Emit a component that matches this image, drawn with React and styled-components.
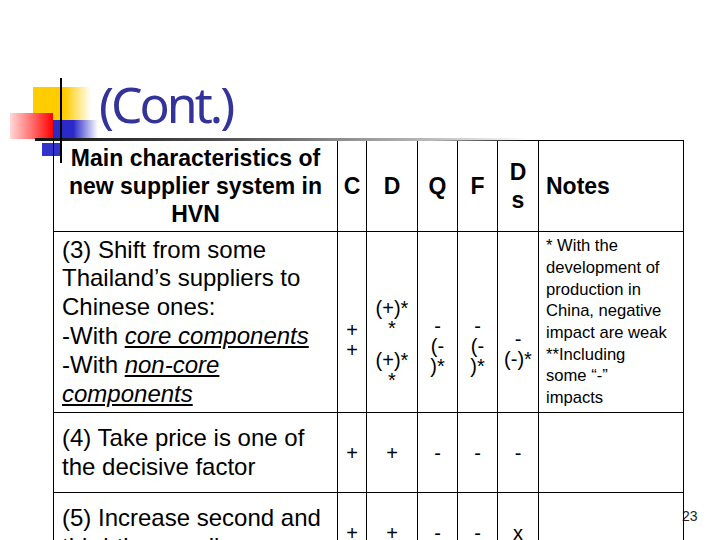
import React from 'react';
import styled, { createGlobalStyle } from 'styled-components';

const Global = createGlobalStyle`
  html, body { margin: 0; padding: 0; background: #fff; overflow: hidden; width: 720px; height: 540px; }
  #root { width: 720px; height: 540px; }
`;

const Slide = styled.div`
  position: relative;
  width: 720px;
  height: 540px;
  overflow: hidden;
  background: #fff;
  font-family: "Liberation Sans", Arial, sans-serif;
  color: #000;
`;

const Deco = styled.div`
  position: absolute;
  left: ${p => p.$x}px;
  top: ${p => p.$y}px;
  width: ${p => p.$w}px;
  height: ${p => p.$h}px;
  background: ${p => p.$bg};
  z-index: ${p => p.$z || 0};
`;

const TitleBar = styled.header`
  height: 140px;
  box-sizing: border-box;
  padding: 79px 0 0 99px;
  position: relative;
  z-index: 1;
`;

const Title = styled.h1`
  margin: 0;
  font-family: "Noto Sans", sans-serif;
  font-weight: 400;
  font-size: 50px;
  line-height: 50px;
  color: #333399;
  letter-spacing: -3px;
`;

const Table = styled.div`
  position: relative;
  z-index: 1;
  margin-left: 53px;
  width: 630px;
  display: grid;
  grid-template-columns: 284px 29px 51px 40px 40px 41px 145px;
  grid-template-rows: 91px 181px 80px 80px;
  border-top: 1px solid #000;
  border-left: 1px solid #000;
`;

const Cell = styled.div`
  box-sizing: border-box;
  border-right: 1px solid #000;
  border-bottom: 1px solid #000;
  display: flex;
  flex-direction: column;
  justify-content: center;
  align-items: ${p => (p.$left ? 'flex-start' : 'center')};
  text-align: ${p => (p.$left ? 'left' : 'center')};
`;

const HeadCell = styled(Cell)`
  font-weight: 700;
  font-size: 23px;
  line-height: 28px;
  padding-left: ${p => (p.$left ? '7px' : '0')};
  white-space: nowrap;
`;

const TextCell = styled(Cell)`
  font-size: 24px;
  line-height: 28.8px;
  padding-left: 8px;
  white-space: nowrap;
`;

const ValueCell = styled(Cell)`
  font-size: 20px;
  line-height: 20px;
  padding-top: ${p => p.$shift || 0}px;
  white-space: nowrap;
`;

const Group = styled.div`
  display: flex;
  flex-direction: column;
  align-items: center;
  gap: ${p => p.$gap || 0}px;
`;

const NoteCell = styled(Cell)`
  font-size: 16.6px;
  line-height: 21.7px;
  padding-left: 7px;
  white-space: nowrap;
`;

const Em = styled.span`
  font-style: italic;
  text-decoration: underline;
`;

const PageNo = styled.div`
  position: absolute;
  left: 682px;
  top: 508px;
  font-family: "Liberation Sans", Arial, sans-serif;
  font-size: 14px;
  color: #222;
`;

export default function App() {
  return (
    <>
      <Global />
      <Slide>
        <Deco $x={33} $y={87} $w={58} $h={33} $bg="linear-gradient(to right, #ffcc00 0%, #ffcc00 55%, #ffffff 100%)" />
        <Deco $x={10} $y={113} $w={43} $h={26} $bg="linear-gradient(to right, #ffd8d8 0%, #ff7070 50%, #ff0000 100%)" />
        <Deco $x={53} $y={120} $w={45} $h={19} $bg="linear-gradient(to right, #2a2ac8 0%, #2a2ac8 45%, #ffffff 100%)" />
        <Deco $x={42} $y={143} $w={20} $h={13} $bg="#3333cc" />
        <Deco $x={35} $y={138} $w={660} $h={3} $bg="linear-gradient(to right, #111 0%, #555 30%, #bbb 60%, rgba(255,255,255,0) 75%)" $z={2} />
        <Deco $x={60} $y={78} $w={2} $h={85} $bg="#000" $z={3} />
        <TitleBar>
          <Title>(Cont.)</Title>
        </TitleBar>
        <Table>
          <HeadCell>Main characteristics of<br />new supplier system in<br />HVN</HeadCell>
          <HeadCell>C</HeadCell>
          <HeadCell>D</HeadCell>
          <HeadCell>Q</HeadCell>
          <HeadCell>F</HeadCell>
          <HeadCell>D<br />s</HeadCell>
          <HeadCell $left>Notes</HeadCell>

          <TextCell $left>
            <span>(3) Shift from some</span>
            <span>Thailand’s suppliers to</span>
            <span>Chinese ones:</span>
            <span>-With <Em>core components</Em></span>
            <span>-With <Em>non-core</Em></span>
            <span><Em>components</Em></span>
          </TextCell>
          <ValueCell $shift={36}>
            <Group><span>+</span><span>+</span></Group>
          </ValueCell>
          <ValueCell $shift={44}>
            <Group $gap={12}>
              <Group><span>(+)*</span><span>*</span></Group>
              <Group><span>(+)*</span><span>*</span></Group>
            </Group>
          </ValueCell>
          <ValueCell $shift={48}>
            <Group><span>-</span><span>(-</span><span>)*</span></Group>
          </ValueCell>
          <ValueCell $shift={48}>
            <Group><span>-</span><span>(-</span><span>)*</span></Group>
          </ValueCell>
          <ValueCell $shift={54}>
            <Group><span>-</span><span>(-)*</span></Group>
          </ValueCell>
          <NoteCell $left>
            <span>* With the</span>
            <span>development of</span>
            <span>production in</span>
            <span>China, negative</span>
            <span>impact are weak</span>
            <span>**Including</span>
            <span>some “-”</span>
            <span>impacts</span>
          </NoteCell>

          <TextCell $left>
            <span>(4) Take price is one of</span>
            <span>the decisive factor</span>
          </TextCell>
          <ValueCell>+</ValueCell>
          <ValueCell>+</ValueCell>
          <ValueCell>-</ValueCell>
          <ValueCell>-</ValueCell>
          <ValueCell>-</ValueCell>
          <NoteCell $left />

          <TextCell $left>
            <span>(5) Increase second and</span>
            <span>third-tier suppliers</span>
          </TextCell>
          <ValueCell>+</ValueCell>
          <ValueCell>+</ValueCell>
          <ValueCell>-</ValueCell>
          <ValueCell>-</ValueCell>
          <ValueCell>x</ValueCell>
          <NoteCell $left />
        </Table>
        <PageNo>23</PageNo>
      </Slide>
    </>
  );
}
